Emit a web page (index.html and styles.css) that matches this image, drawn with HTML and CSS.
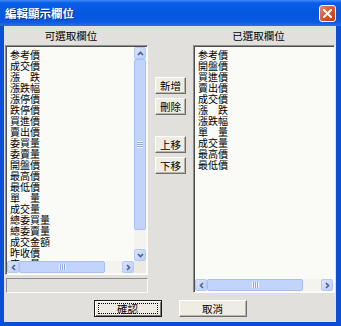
FILE: index.html
```html
<!DOCTYPE html>
<html lang="zh-Hant">
<head>
  <meta charset="UTF-8" />
  <title>編輯顯示欄位</title>
  <link rel="stylesheet" href="styles.css">
</head>
<body>
  <div class="window">
    <div class="titlebar">
      <span class="title">編輯顯示欄位</span>
      <span class="close-btn">
        <svg width="9" height="9" viewBox="0 0 9 9"><path d="M1 1L8 8M8 1L1 8" stroke="#fff" stroke-width="2" stroke-linecap="square"/></svg>
      </span>
    </div>

    <div class="dialog-body">
      <div class="columns">
        <div class="col col-left">
          <div class="col-label">可選取欄位</div>
          <div class="listbox listbox-left">
            <ul class="items">
              <li>参考價</li>
              <li>成交價</li>
              <li>漲　跌</li>
              <li>漲跌幅</li>
              <li>漲停價</li>
              <li>跌停價</li>
              <li>買進價</li>
              <li>賣出價</li>
              <li>委買量</li>
              <li>委賣量</li>
              <li>開盤價</li>
              <li>最高價</li>
              <li>最低價</li>
              <li>單　量</li>
              <li>成交量</li>
              <li>總委買量</li>
              <li>總委賣量</li>
              <li>成交金額</li>
              <li>昨收價</li>
              <li>庫　量</li>
            </ul>
            <div class="vscroll">
              <span class="arrow">
                <svg width="7" height="5" viewBox="0 0 7 5"><path d="M1 4L3.5 1.5L6 4" fill="none" stroke="#4d6185" stroke-width="1.6"/></svg>
              </span>
              <span class="thumb thumb-v"></span>
              <span class="track"></span>
              <span class="arrow">
                <svg width="7" height="5" viewBox="0 0 7 5"><path d="M1 1L3.5 3.5L6 1" fill="none" stroke="#4d6185" stroke-width="1.6"/></svg>
              </span>
            </div>
            <div class="hscroll">
              <span class="arrow">
                <svg width="5" height="7" viewBox="0 0 5 7"><path d="M4 1L1.5 3.5L4 6" fill="none" stroke="#4d6185" stroke-width="1.6"/></svg>
              </span>
              <span class="thumb thumb-h thumb-left"></span>
              <span class="track"></span>
              <span class="arrow">
                <svg width="5" height="7" viewBox="0 0 5 7"><path d="M1 1L3.5 3.5L1 6" fill="none" stroke="#4d6185" stroke-width="1.6"/></svg>
              </span>
            </div>
            <div class="corner"></div>
          </div>
          <div class="status"></div>
        </div>

        <div class="col col-mid">
          <button class="btn btn-small">新增</button>
          <button class="btn btn-small">刪除</button>
          <button class="btn btn-small btn-gap">上移</button>
          <button class="btn btn-small">下移</button>
        </div>

        <div class="col col-right">
          <div class="col-label">已選取欄位</div>
          <div class="listbox listbox-right">
            <ul class="items">
              <li>参考價</li>
              <li>開盤價</li>
              <li>買進價</li>
              <li>賣出價</li>
              <li>成交價</li>
              <li>漲　跌</li>
              <li>漲跌幅</li>
              <li>單　量</li>
              <li>成交量</li>
              <li>最高價</li>
              <li>最低價</li>
            </ul>
            <div class="hscroll">
              <span class="arrow">
                <svg width="5" height="7" viewBox="0 0 5 7"><path d="M4 1L1.5 3.5L4 6" fill="none" stroke="#4d6185" stroke-width="1.6"/></svg>
              </span>
              <span class="thumb thumb-h thumb-right"></span>
              <span class="track"></span>
              <span class="arrow">
                <svg width="5" height="7" viewBox="0 0 5 7"><path d="M1 1L3.5 3.5L1 6" fill="none" stroke="#4d6185" stroke-width="1.6"/></svg>
              </span>
            </div>
          </div>
        </div>
      </div>

      <div class="actions">
        <button class="btn btn-wide btn-default">確認</button>
        <button class="btn btn-wide">取消</button>
      </div>
    </div>
  </div>
</body>
</html>
```

FILE: styles.css
```css
body {
  margin: 0;
  font-family: "Noto Sans CJK TC", "Noto Sans", sans-serif;
  color: #000;
  background: #fff;
}
.window {
  width: 341px;
  height: 326px;
  display: flex;
  flex-direction: column;
  background: #0b4fd8;
}
.titlebar {
  flex: none;
  height: 26px;
  display: flex;
  align-items: center;
  justify-content: space-between;
  padding: 0 5px 0 5px;
  background: linear-gradient(#3d8df7 0, #0a5de6 3px, #0656e0 55%, #0a5be2 85%, #2a6fe9 100%);
}
.title {
  color: #fff;
  font-size: 11.5px;
  font-weight: bold;
  text-shadow: 1px 1px 0 #0a2a8a;
}
.close-btn {
  width: 15px;
  height: 15px;
  display: flex;
  align-items: center;
  justify-content: center;
  border: 1px solid #fff;
  border-radius: 3px;
  background: linear-gradient(135deg, #e88a6b, #d6532c 55%, #c13d19);
  margin-top: 1px;
}
.dialog-body {
  flex: 1;
  margin: 0 5px 4px 4px;
  background: #e2e0dc;
  display: flex;
  flex-direction: column;
}
.columns {
  display: flex;
  padding-left: 1px;
  height: 267px;
}
.col-left {
  width: 143px;
  display: flex;
  flex-direction: column;
}
.col-mid {
  width: 45px;
  display: flex;
  flex-direction: column;
  align-items: center;
  padding-top: 51px;
  box-sizing: border-box;
}
.col-right {
  width: 142px;
  display: flex;
  flex-direction: column;
}
.col-label {
  height: 19px;
  line-height: 19px;
  font-size: 10.5px;
  text-align: center;
  padding-right: 11px;
}
.listbox {
  box-sizing: border-box;
  border: 1px solid;
  border-color: #8e8e8e #fbfbfb #fbfbfb #8e8e8e;
  box-shadow: inset 1px 1px 0 #4f4f4f;
  padding: 1px 1px 1px 1px;
  background: #fafaf7;
  display: grid;
  overflow: hidden;
}
.listbox-left {
  height: 233px;
  grid-template-columns: 1fr 12px;
  grid-template-rows: 1fr 12px;
}
.listbox-right {
  height: 248px;
  grid-template-columns: 1fr;
  grid-template-rows: 1fr 12px;
}
.items {
  list-style: none;
  margin: 0;
  padding: 2px 0 0 3px;
  font-size: 10px;
  line-height: 11px;
  overflow: hidden;
  min-height: 0;
}
.vscroll {
  display: flex;
  flex-direction: column;
  min-height: 0;
  background: #f4f3ee;
}
.hscroll {
  display: flex;
  background: #f4f3ee;
}
.arrow {
  flex: none;
  width: 12px;
  height: 12px;
  box-sizing: border-box;
  border: 1px solid #b4c8f6;
  border-radius: 2px;
  background: linear-gradient(135deg, #d9e4fd, #bccefa);
  display: flex;
  align-items: center;
  justify-content: center;
}
.thumb {
  flex: none;
  box-sizing: border-box;
  border: 1px solid #a9bff4;
  border-radius: 2px;
  background: #c3d4fc;
  display: flex;
  align-items: center;
  justify-content: center;
}
.thumb::after {
  content: "";
  display: block;
}
.thumb-v {
  height: 171px;
}
.thumb-v::after {
  width: 6px;
  height: 7px;
  background: repeating-linear-gradient(#eef3ff 0 1px, #8fa8e6 1px 2px);
}
.thumb-h::after {
  width: 7px;
  height: 6px;
  background: repeating-linear-gradient(90deg, #eef3ff 0 1px, #8fa8e6 1px 2px);
}
.thumb-left {
  width: 86px;
}
.thumb-right {
  width: 96px;
}
.track {
  flex: 1;
}
.corner {
  background: #ecebe3;
}
.status {
  box-sizing: border-box;
  margin-top: 3px;
  margin-left: 1px;
  height: 15px;
  border: 1px solid;
  border-color: #8e8e8e #fbfbfb #fbfbfb #8e8e8e;
  background: #e0dfdb;
}
.btn {
  box-sizing: border-box;
  font-family: inherit;
  font-size: 10.5px;
  color: #000;
  background: #efede3;
  border: 1px solid;
  border-color: #fff #6d6d6d #6d6d6d #fff;
  box-shadow: inset -1px -1px 0 #b9b5a6;
  padding: 0;
  line-height: 15px;
}
.btn-small {
  width: 31px;
  height: 17px;
  margin-bottom: 4px;
}
.btn-gap {
  margin-top: 17px;
}
.actions {
  display: flex;
  justify-content: center;
  gap: 17px;
  margin-top: 7px;
}
.btn-wide {
  width: 68px;
  height: 17px;
}
.btn-default {
  position: relative;
  border-color: #1a1a1a;
  box-shadow: inset 1px 1px 0 #fff, inset -1px -1px 0 #7a7a7a;
}
.btn-default::after {
  content: "";
  position: absolute;
  left: 3px;
  top: 2px;
  right: 3px;
  bottom: 2px;
  border: 1px dotted #000;
}
```
